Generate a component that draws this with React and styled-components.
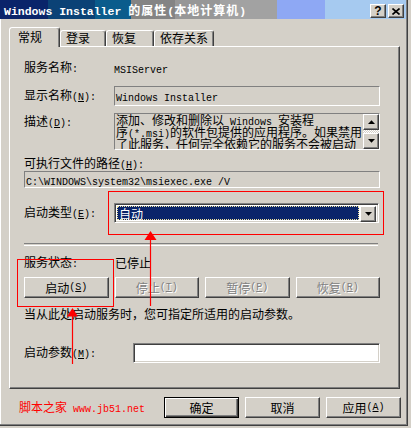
import React from 'react';
import styled, { createGlobalStyle } from 'styled-components';

const FACE = '#d4d0c8';

const GlobalStyle = createGlobalStyle`
  html, body { margin: 0; padding: 0; background: ${FACE}; }
  body {
    font-family: "Noto Sans CJK SC", "Noto Sans", sans-serif;
    font-size: 12px;
    line-height: 12px;
    color: #000;
  }
  #root { width: 411px; height: 428px; overflow: hidden; }
`;

const Lat = styled.span`
  font-family: "Liberation Mono", "DejaVu Sans Mono", monospace;
  font-size: ${(p) => p.$size || 10}px;
  line-height: 10px;
`;

function Mixed({ text, size }) {
  const parts = text.split(/([\x20-\x7e]+)/).filter(Boolean);
  return parts.map((p, i) =>
    /^[\x20-\x7e]+$/.test(p) ? (
      <Lat key={i} $size={size}>{p}</Lat>
    ) : (
      <React.Fragment key={i}>{p}</React.Fragment>
    )
  );
}

function Acc({ pre, k, size }) {
  return (
    <>
      {pre}
      <Lat $size={size}>
        (<u>{k}</u>)
      </Lat>
    </>
  );
}

const Window = styled.div`
  position: relative;
  box-sizing: border-box;
  width: 408px;
  height: 426px;
  background: ${FACE};
  border-right: 1px solid #404040;
  border-bottom: 1px solid #404040;
  box-shadow: inset -1px -1px 0 #808080, inset 1px 0 0 #fff;
  display: flex;
  flex-direction: column;
`;

const TitleBar = styled.div`
  height: 19px;
  margin-right: 1px;
  display: flex;
  align-items: flex-start;
  padding: 0 2px 0 4px;
  background: linear-gradient(
    90deg,
    #0a246a 0 48px,
    #0b4276 48px 95px,
    #0a5c8c 95px 131px,
    #848484 131px 175px,
    #979797 175px 220px,
    #a2a2a2 220px 277px,
    #8ea8f4 277px 325px,
    #a6caf0 325px
  );
`;

const TitleText = styled.div`
  flex: 1;
  color: #fff;
  font-weight: bold;
  white-space: pre;
  padding-top: 4px;
  letter-spacing: 1px;
  & > span { letter-spacing: 0; }
`;

const TitleButtons = styled.div`
  display: flex;
  gap: 2px;
  margin-top: 4px;
`;

const TitleBtn = styled.div`
  box-sizing: border-box;
  width: 16px;
  height: 14px;
  background: ${FACE};
  border: 1px solid;
  border-color: #fff #404040 #404040 #fff;
  box-shadow: inset -1px -1px 0 #808080;
  display: flex;
  align-items: center;
  justify-content: center;
  font-family: "Liberation Sans", Arial, sans-serif;
  font-weight: bold;
  font-size: 12px;
  line-height: 12px;
`;

const TabRow = styled.div`
  display: flex;
  align-items: flex-end;
  height: 19px;
  margin-top: 8px;
  padding-left: 9px;
  position: relative;
  z-index: 1;
`;

const Tab = styled.div`
  box-sizing: border-box;
  width: ${(p) => p.$w}px;
  height: ${(p) => (p.$active ? 20 : 16)}px;
  margin-bottom: ${(p) => (p.$active ? -1 : 0)}px;
  background: ${FACE};
  border: 1px solid;
  border-bottom: none;
  border-color: #fff #404040 transparent #fff;
  border-radius: 3px 3px 0 0;
  box-shadow: inset -1px 0 0 #808080;
  padding: ${(p) => (p.$active ? '3px 0 0 8px' : '1px 0 0 5px')};
  white-space: pre;
`;

const Panel = styled.div`
  box-sizing: border-box;
  margin-left: 9px;
  width: 391px;
  height: 343px;
  border: 1px solid;
  border-color: #fff #404040 #404040 #fff;
  box-shadow: inset -1px -1px 0 #808080;
  padding: 0 19px 0 14px;
  display: flex;
  flex-direction: column;
`;

const Row = styled.div`
  display: flex;
  align-items: ${(p) => (p.$top ? 'flex-start' : 'center')};
  margin-top: ${(p) => p.$mt}px;
  height: ${(p) => p.$h}px;
  flex: none;
`;

const Label = styled.div`
  width: ${(p) => p.$w || 90}px;
  flex: none;
  white-space: pre;
  padding-top: ${(p) => p.$pt || 0}px;
`;

const Text = styled.div`
  white-space: pre;
  height: 12px;
  padding-left: ${(p) => p.$pl || 0}px;
`;

const Field = styled.div`
  flex: 1;
  box-sizing: border-box;
  height: 100%;
  border: 1px solid;
  border-color: #808080 #fff #fff #808080;
  padding: ${(p) => p.$pt || 0}px 0 0 1px;
  white-space: pre;
  overflow: hidden;
`;

const DescBox = styled.div`
  flex: 1;
  box-sizing: border-box;
  height: 100%;
  border: 1px solid;
  border-color: #808080 #fff #fff #808080;
  display: flex;
`;

const DescText = styled.div`
  flex: 1;
  padding: 0 0 0 1px;
  overflow: hidden;
  display: flex;
  flex-direction: column;
`;

const DescLine = styled.div`
  height: 12px;
  flex: none;
  white-space: pre;
`;

const ScrollBar = styled.div`
  width: 16px;
  display: flex;
  flex-direction: column;
`;

const ScrollBtn = styled.div`
  box-sizing: border-box;
  height: 16px;
  background: ${FACE};
  border: 1px solid;
  border-color: #fff #404040 #404040 #fff;
  box-shadow: inset -1px -1px 0 #808080;
  display: flex;
  align-items: center;
  justify-content: center;
`;

const ScrollTrack = styled.div`
  flex: 1;
  background-image: conic-gradient(#fff 25%, ${FACE} 0 50%, #fff 0 75%, ${FACE} 0);
  background-size: 2px 2px;
`;

const Combo = styled.div`
  flex: 1;
  margin-right: 1px;
  box-sizing: border-box;
  height: 100%;
  border: 1px solid;
  border-color: #808080 #fff #fff #808080;
  box-shadow: inset 1px 1px 0 #404040, inset -1px -1px 0 ${FACE};
  background: #fff;
  padding: 2px;
  display: flex;
  gap: 1px;
`;

const Selection = styled.div`
  flex: 1;
  box-sizing: border-box;
  background: #0a246a;
  color: #fff;
  border: 1px dotted #f0e4a0;
  padding: 1px 0 0 1px;
`;

const DropBtn = styled(ScrollBtn)`
  width: 16px;
  height: 16px;
`;

const Separator = styled.div`
  margin-top: 20px;
  margin-right: 2px;
  height: 1px;
  border-top: 1px solid #808080;
  border-bottom: 1px solid #fff;
  flex: none;
`;

const ButtonGrid = styled.div`
  display: grid;
  grid-template-columns: repeat(4, 1fr);
  gap: 6px;
  margin-top: 8px;
  height: 21px;
  flex: none;
`;

const Button = styled.div`
  box-sizing: border-box;
  height: 21px;
  width: ${(p) => (p.$w ? `${p.$w}px` : 'auto')};
  background: ${FACE};
  border: 1px solid;
  border-color: ${(p) => (p.$default ? '#000' : '#fff #404040 #404040 #fff')};
  box-shadow: ${(p) =>
    p.$default
      ? 'inset 1px 1px 0 #fff, inset -1px -1px 0 #404040, inset -2px -2px 0 #808080'
      : 'inset -1px -1px 0 #808080'};
  display: flex;
  align-items: center;
  justify-content: center;
  white-space: pre;
  color: ${(p) => (p.$disabled ? '#808080' : '#000')};
  text-shadow: ${(p) => (p.$disabled ? '1px 1px 0 #fff' : 'none')};
`;

const Input = styled.div`
  flex: 1;
  box-sizing: border-box;
  height: 100%;
  background: #fff;
  border: 1px solid;
  border-color: #808080 #fff #fff #808080;
  box-shadow: inset 1px 1px 0 #404040, inset -1px -1px 0 ${FACE};
`;

const Footer = styled.div`
  display: flex;
  align-items: center;
  margin-top: 8px;
  height: 21px;
  padding: 0 6px 0 19px;
  gap: 6px;
`;

const Watermark = styled.div`
  flex: 1;
  color: #ff0000;
  white-space: pre;
`;

const Overlay = styled.svg`
  position: absolute;
  left: 0;
  top: 0;
  width: 411px;
  height: 428px;
  pointer-events: none;
  z-index: 5;
`;

const UpArrow = () => (
  <svg width="7" height="4" viewBox="0 0 7 4">
    <polygon points="0,4 7,4 3.5,0.3" fill="#000" />
  </svg>
);
const DownArrow = () => (
  <svg width="7" height="4" viewBox="0 0 7 4">
    <polygon points="0,0 7,0 3.5,3.7" fill="#000" />
  </svg>
);

export default function App() {
  return (
    <>
      <GlobalStyle />
      <Window>
        <TitleBar>
          <TitleText>
            <Mixed text="Windows Installer 的属性(本地计算机)" size={11.5} />
          </TitleText>
          <TitleButtons>
            <TitleBtn>?</TitleBtn>
            <TitleBtn>
              <svg width="8" height="7" viewBox="0 0 8 7">
                <path d="M0.5 0.5L7.5 6.5M7.5 0.5L0.5 6.5" stroke="#000" strokeWidth="1.6" />
              </svg>
            </TitleBtn>
          </TitleButtons>
        </TitleBar>

        <TabRow>
          <Tab $active $w={51}>常规</Tab>
          <Tab $w={46}>登录</Tab>
          <Tab $w={48}>恢复</Tab>
          <Tab $w={60}>依存关系</Tab>
        </TabRow>

        <Panel>
          <Row $mt={15} $h={12}>
            <Label>
              服务名称<Lat>:</Lat>
            </Label>
            <Text>
              <Lat>MSIServer</Lat>
            </Text>
          </Row>

          <Row $mt={12} $h={20}>
            <Label>
              <Acc pre="显示名称" k="N" />
              <Lat>:</Lat>
            </Label>
            <Field $pt={3}>
              <Lat>Windows Installer</Lat>
            </Field>
          </Row>

          <Row $mt={7} $h={37} $top>
            <Label $pt={2}>
              <Acc pre="描述" k="D" />
              <Lat>:</Lat>
            </Label>
            <DescBox>
              <DescText>
                <DescLine><Mixed text="添加、修改和删除以 Windows 安装程" /></DescLine>
                <DescLine><Mixed text="序(*.msi)的软件包提供的应用程序。如果禁用" /></DescLine>
                <DescLine><Mixed text="了此服务，任何完全依赖它的服务不会被启动" /></DescLine>
              </DescText>
              <ScrollBar>
                <ScrollBtn><UpArrow /></ScrollBtn>
                <ScrollTrack />
                <ScrollBtn><DownArrow /></ScrollBtn>
              </ScrollBar>
            </DescBox>
          </Row>

          <Row $mt={7} $h={12}>
            <Text>
              <Acc pre="可执行文件的路径" k="H" />
              <Lat>:</Lat>
            </Text>
          </Row>

          <Row $mt={2} $h={17}>
            <Field $pt={2}>
              <Lat>C:\WINDOWS\system32\msiexec.exe /V</Lat>
            </Field>
          </Row>

          <Row $mt={15} $h={20}>
            <Label>
              <Acc pre="启动类型" k="E" />
              <Lat>:</Lat>
            </Label>
            <Combo>
              <Selection>自动</Selection>
              <DropBtn><DownArrow /></DropBtn>
            </Combo>
          </Row>

          <Separator />

          <Row $mt={11} $h={12}>
            <Label>
              服务状态<Lat>:</Lat>
            </Label>
            <Text $pl={1}>已停止</Text>
          </Row>

          <ButtonGrid>
            <Button><Acc pre="启动" k="S" /></Button>
            <Button $disabled><Acc pre="停止" k="T" /></Button>
            <Button $disabled><Acc pre="暂停" k="P" /></Button>
            <Button $disabled><Acc pre="恢复" k="R" /></Button>
          </ButtonGrid>

          <Row $mt={10} $h={12}>
            <Text>当从此处启动服务时，您可指定所适用的启动参数。</Text>
          </Row>

          <Row $mt={23} $h={20}>
            <Label $w={109}>
              <Acc pre="启动参数" k="M" />
              <Lat>:</Lat>
            </Label>
            <Input />
          </Row>
        </Panel>

        <Footer>
          <Watermark>
            <Mixed text="脚本之家 www.jb51.net" />
          </Watermark>
          <Button $default $w={75}>确定</Button>
          <Button $w={75}>取消</Button>
          <Button $w={75}><Acc pre="应用" k="A" /></Button>
        </Footer>

        <Overlay viewBox="0 0 411 428">
          <rect x="108.5" y="191.5" width="275" height="43" fill="none" stroke="#ff0000" strokeWidth="1" />
          <rect x="17.5" y="259.5" width="96" height="47" fill="none" stroke="#ff0000" strokeWidth="1" />
          <line x1="150.5" y1="238" x2="150.5" y2="306" stroke="#ff0000" strokeWidth="1.2" />
          <polygon points="150.5,231 144.5,240 156.5,240" fill="#ff0000" />
          <line x1="72.5" y1="315" x2="72.5" y2="364" stroke="#ff0000" strokeWidth="1.2" />
          <polygon points="72.5,308 67,316.5 78,316.5" fill="#ff0000" />
        </Overlay>
      </Window>
    </>
  );
}
